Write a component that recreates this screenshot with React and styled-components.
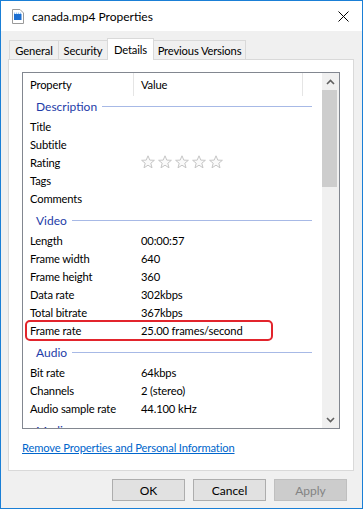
import React from 'react';
import styled, { createGlobalStyle } from 'styled-components';

const GlobalStyle = createGlobalStyle`
  body {
    margin: 0;
    font-family: Lato, "Liberation Sans", Arial, sans-serif;
    font-size: 11.2px;
    letter-spacing: -0.15px;
    color: #000;
  }
`;

const Window = styled.div`
  width: 363px;
  height: 509px;
  box-sizing: border-box;
  border: 1px solid #1a7fd6;
  background: #f0f0f0;
  display: flex;
  flex-direction: column;
`;

const TitleBar = styled.div`
  height: 30px;
  background: #fff;
  display: flex;
  align-items: center;
  padding-left: 11px;
  gap: 8px;
  font-size: 12px;
  letter-spacing: 0;
`;

const TitleText = styled.span`
  flex: 1;
  padding-top: 1px;
`;

const CloseButton = styled.div`
  width: 46px;
  height: 30px;
  display: flex;
  align-items: center;
  justify-content: center;
  margin-right: -4px;
`;

const Body = styled.div`
  flex: 1;
  display: flex;
  flex-direction: column;
  padding: 7px 8px 0 7px;
`;

const TabRow = styled.div`
  height: 21px;
  display: flex;
  align-items: flex-end;
  padding-left: 1px;
`;

const Tab = styled.div`
  box-sizing: border-box;
  width: ${p => p.w}px;
  height: ${p => (p.active ? 22 : 19)}px;
  margin-left: -1px;
  margin-bottom: ${p => (p.active ? -1 : 0)}px;
  border: 1px solid #d9d9d9;
  border-bottom: none;
  background: ${p => (p.active ? '#fff' : '#f0f0f0')};
  position: relative;
  z-index: ${p => (p.active ? 2 : 1)};
  display: flex;
  align-items: center;
  justify-content: center;
  white-space: nowrap;
  padding-top: ${p => (p.active ? 0 : 1)}px;
  &:first-child {
    margin-left: 0;
  }
`;

const Panel = styled.div`
  box-sizing: border-box;
  height: 412px;
  border: 1px solid #d9d9d9;
  background: #fff;
  padding: 12px 0 0 13px;
  display: flex;
  flex-direction: column;
`;

const ListBox = styled.div`
  box-sizing: border-box;
  width: 318px;
  height: 357px;
  border: 1px solid #828790;
  display: flex;
  overflow: hidden;
`;

const ListContent = styled.div`
  flex: 1;
  overflow: hidden;
`;

const HeaderRow = styled.div`
  height: 23px;
  display: grid;
  grid-template-columns: 111px 169px 1fr;
`;

const HeaderCell = styled.div`
  display: flex;
  align-items: center;
  padding-left: 7px;
  border-right: ${p => (p.last ? 'none' : '1px solid #e5e5e5')};
`;

const GroupHeader = styled.div`
  box-sizing: border-box;
  height: ${p => (p.first ? 21 : 24)}px;
  padding: ${p => (p.first ? 0 : 2)}px 10px 0 13px;
  display: flex;
  align-items: center;
  color: #1e3ca8;
  font-size: 12px;
  letter-spacing: 0;
  &::after {
    content: '';
    flex: 1;
    height: 1px;
    background: #a7b9e6;
    margin-left: 5px;
  }
`;

const Row = styled.div`
  height: 18px;
  display: grid;
  grid-template-columns: 111px 1fr;
  align-items: center;
  position: relative;
  ${p =>
    p.highlight &&
    `
    &::after {
      content: '';
      position: absolute;
      left: 2px;
      top: -1px;
      width: 248px;
      height: 21px;
      box-sizing: border-box;
      border: 2px solid #e2242c;
      border-radius: 5px;
    }
  `}
`;

const Label = styled.span`
  padding-left: 7px;
  white-space: nowrap;
`;

const Value = styled.span`
  padding-left: 7px;
  white-space: nowrap;
  display: flex;
  align-items: center;
  gap: 3px;
`;

const ScrollBar = styled.div`
  width: 17px;
  background: #f0f0f0;
  display: flex;
  flex-direction: column;
`;

const ScrollArrow = styled.div`
  height: 17px;
  display: flex;
  align-items: center;
  justify-content: center;
`;

const ScrollTrack = styled.div`
  flex: 1;
`;

const Thumb = styled.div`
  height: 97px;
  margin-right: 2px;
  background: #cdcdcd;
`;

const Link = styled.a`
  margin-top: 11px;
  color: #0066cc;
  text-decoration: underline;
  line-height: 16px;
  align-self: flex-start;
`;

const Footer = styled.div`
  display: flex;
  justify-content: flex-end;
  gap: 8px;
  padding: 8px 7px 7px 0;
`;

const Button = styled.button`
  width: 73px;
  height: 22px;
  box-sizing: border-box;
  font-family: inherit;
  font-size: 12px;
  border: 1px solid ${p => (p.disabled ? '#bfbfbf' : '#adadad')};
  background: ${p => (p.disabled ? '#cccccc' : '#e1e1e1')};
  color: ${p => (p.disabled ? '#838383' : '#000')};
  padding: 0;
`;

const FileIcon = () => (
  <svg width="12" height="15" viewBox="0 0 12 15">
    <path d="M0.5 0.5 H8 L11.5 4 V14.5 H0.5 Z" fill="#fff" stroke="#9a9a9a" />
    <rect x="2" y="5" width="7.5" height="6" fill="#1c6fd1" />
    <path d="M2 4.2 H9.5" stroke="#62a8f0" strokeDasharray="1.2 0.8" />
  </svg>
);

const CloseIcon = () => (
  <svg width="11" height="11" viewBox="0 0 11 11">
    <path d="M0.5 0.5 L10.5 10.5 M10.5 0.5 L0.5 10.5" stroke="#000" strokeWidth="1" />
  </svg>
);

const Chevron = ({ down }) => (
  <svg width="9" height="6" viewBox="0 0 9 6">
    <polyline
      points={down ? '1,1 4.5,4.5 8,1' : '1,5 4.5,1.5 8,5'}
      fill="none"
      stroke="#606060"
      strokeWidth="1.6"
    />
  </svg>
);

const StarIcon = () => (
  <svg width="14" height="14" viewBox="0 0 14 14">
    <polygon
      points="7,0.8 8.8,5.1 13.4,5.3 9.8,8.2 11,12.8 7,10.2 3,12.8 4.2,8.2 0.6,5.3 5.2,5.1"
      fill="#fafafa"
      stroke="#c6c6c6"
      strokeWidth="1"
    />
  </svg>
);

const groups = [
  {
    name: 'Description',
    rows: [['Title'], ['Subtitle'], ['Rating', 'stars'], ['Tags'], ['Comments']],
  },
  {
    name: 'Video',
    rows: [
      ['Length', '00:00:57'],
      ['Frame width', '640'],
      ['Frame height', '360'],
      ['Data rate', '302kbps'],
      ['Total bitrate', '367kbps'],
      ['Frame rate', '25.00 frames/second', true],
    ],
  },
  {
    name: 'Audio',
    rows: [
      ['Bit rate', '64kbps'],
      ['Channels', '2 (stereo)'],
      ['Audio sample rate', '44.100 kHz'],
    ],
  },
  { name: 'Media', rows: [] },
];

const tabs = [
  ['General', 50],
  ['Security', 50],
  ['Details', 47],
  ['Previous Versions', 93],
];

export default function App() {
  return (
    <>
      <GlobalStyle />
      <Window>
        <TitleBar>
          <FileIcon />
          <TitleText>canada.mp4 Properties</TitleText>
          <CloseButton>
            <CloseIcon />
          </CloseButton>
        </TitleBar>
        <Body>
          <TabRow>
            {tabs.map(([t, w]) => (
              <Tab key={t} w={w} active={t === 'Details'}>
                {t}
              </Tab>
            ))}
          </TabRow>
          <Panel>
            <ListBox>
              <ListContent>
                <HeaderRow>
                  <HeaderCell>Property</HeaderCell>
                  <HeaderCell>Value</HeaderCell>
                  <HeaderCell last />
                </HeaderRow>
                {groups.map((g, gi) => (
                  <React.Fragment key={g.name}>
                    <GroupHeader first={gi === 0}>{g.name}</GroupHeader>
                    {g.rows.map(([label, value, hl]) => (
                      <Row key={label} highlight={hl}>
                        <Label>{label}</Label>
                        <Value>
                          {value === 'stars'
                            ? [0, 1, 2, 3, 4].map(i => <StarIcon key={i} />)
                            : value}
                        </Value>
                      </Row>
                    ))}
                  </React.Fragment>
                ))}
              </ListContent>
              <ScrollBar>
                <ScrollArrow>
                  <Chevron />
                </ScrollArrow>
                <ScrollTrack>
                  <Thumb />
                </ScrollTrack>
                <ScrollArrow>
                  <Chevron down />
                </ScrollArrow>
              </ScrollBar>
            </ListBox>
            <Link href="#">Remove Properties and Personal Information</Link>
          </Panel>
          <Footer>
            <Button>OK</Button>
            <Button>Cancel</Button>
            <Button disabled>Apply</Button>
          </Footer>
        </Body>
      </Window>
    </>
  );
}
